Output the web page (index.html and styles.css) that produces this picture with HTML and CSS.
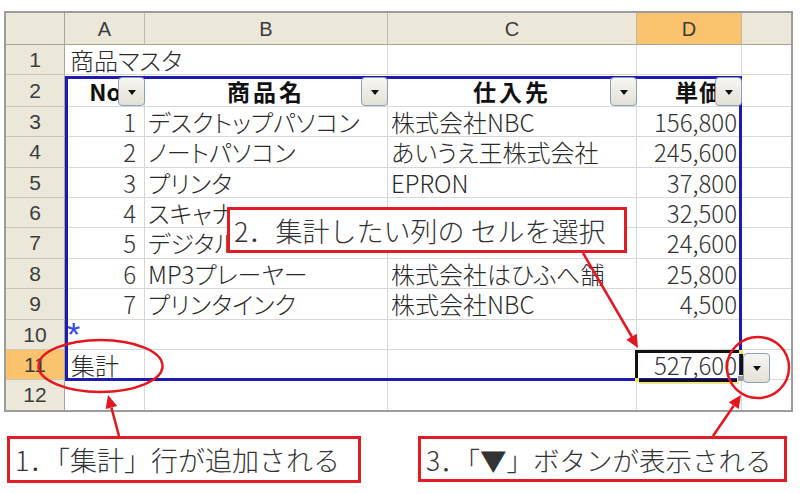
FILE: index.html
```html
<!DOCTYPE html>
<html lang="ja">
<head>
<meta charset="utf-8">
<title>集計行</title>
<link rel="stylesheet" href="styles.css">
</head>
<body>
<div class="page">
  <div class="sheet">
    <div class="corner"></div>
    <div class="ch">A</div>
    <div class="ch">B</div>
    <div class="ch">C</div>
    <div class="ch sel">D</div>
    <div class="ch last"></div>

    <div class="rh">1</div>
    <div class="c span2 txt-l title">商品マスタ</div>
    <div class="c"></div>
    <div class="c"></div>
    <div class="c e"></div>

    <div class="rh">2</div>
    <div class="c hd txt-r pad-no">No.<span class="dd"></span></div>
    <div class="c hd txt-c">商品名<span class="dd"></span></div>
    <div class="c hd txt-c">仕入先<span class="dd"></span></div>
    <div class="c hd txt-r pad-price">単価<span class="dd"></span></div>
    <div class="c e"></div>

    <div class="rh">3</div>
    <div class="c num-a">1</div>
    <div class="c txt-l">デスクトップパソコン</div>
    <div class="c txt-l">株式会社NBC</div>
    <div class="c num-d">156,800</div>
    <div class="c e"></div>

    <div class="rh">4</div>
    <div class="c num-a">2</div>
    <div class="c txt-l">ノートパソコン</div>
    <div class="c txt-l">あいうえ王株式会社</div>
    <div class="c num-d">245,600</div>
    <div class="c e"></div>

    <div class="rh">5</div>
    <div class="c num-a">3</div>
    <div class="c txt-l">プリンタ</div>
    <div class="c txt-l">EPRON</div>
    <div class="c num-d">37,800</div>
    <div class="c e"></div>

    <div class="rh">6</div>
    <div class="c num-a">4</div>
    <div class="c txt-l">スキャナ</div>
    <div class="c txt-l"></div>
    <div class="c num-d">32,500</div>
    <div class="c e"></div>

    <div class="rh">7</div>
    <div class="c num-a">5</div>
    <div class="c txt-l">デジタル</div>
    <div class="c txt-l"></div>
    <div class="c num-d">24,600</div>
    <div class="c e"></div>

    <div class="rh">8</div>
    <div class="c num-a">6</div>
    <div class="c txt-l">MP3プレーヤー</div>
    <div class="c txt-l">株式会社はひふへ舗</div>
    <div class="c num-d">25,800</div>
    <div class="c e"></div>

    <div class="rh">9</div>
    <div class="c num-a">7</div>
    <div class="c txt-l">プリンタインク</div>
    <div class="c txt-l">株式会社NBC</div>
    <div class="c num-d">4,500</div>
    <div class="c e"></div>

    <div class="rh">10</div>
    <div class="c star">*</div>
    <div class="c"></div>
    <div class="c"></div>
    <div class="c"></div>
    <div class="c e"></div>

    <div class="rh sel">11</div>
    <div class="c txt-l total">集計</div>
    <div class="c"></div>
    <div class="c"></div>
    <div class="c num-d">527,600</div>
    <div class="c e"></div>

    <div class="rh b">12</div>
    <div class="c b"></div>
    <div class="c b"></div>
    <div class="c b"></div>
    <div class="c b"></div>
    <div class="c e b"></div>
  </div>

  <div class="notes">
    <div class="note note1">1．「集計」行が追加される</div>
    <div class="note note3">3．「▼」ボタンが表示される</div>
  </div>

  <div class="list-border"></div>
  <div class="cell-sel"></div>
  <div class="handle h-tr"></div>
  <div class="handle h-bl"></div>
  <div class="sel-under"></div>
  <div class="fill-handle"></div>
  <div class="dd dd-total"></div>

  <div class="note2">2．集計したい列の セルを選択</div>

  <svg class="marks" width="800" height="494" viewBox="0 0 800 494" aria-hidden="true">
    <ellipse cx="100.5" cy="366" rx="62" ry="26" fill="none" stroke="#e4161f" stroke-width="2.5"/>
    <ellipse cx="758" cy="367.5" rx="31" ry="30.5" fill="none" stroke="#e4161f" stroke-width="2.5"/>
    <line x1="583" y1="253" x2="632" y2="337" stroke="#e4161f" stroke-width="2.5"/>
    <polygon points="638,348 626.3,339.7 636.7,333.7" fill="#e4161f"/>
    <line x1="119" y1="436" x2="111.4" y2="407.6" stroke="#e4161f" stroke-width="2.5"/>
    <polygon points="108,395 117.2,406 105.6,409.1" fill="#e4161f"/>
    <line x1="713" y1="436" x2="733.7" y2="405.7" stroke="#e4161f" stroke-width="2.5"/>
    <polygon points="741,395 738.7,409.1 728.7,402.3" fill="#e4161f"/>
  </svg>
</div>
</body>
</html>
```

FILE: styles.css
```css
html, body {
  margin: 0;
  padding: 0;
  background: #ffffff;
}

.page {
  position: relative;
  width: 800px;
  height: 494px;
  overflow: hidden;
  font-family: "Noto Sans CJK JP", "Noto Sans", sans-serif;
  color: #2a2a2a;
}

.sheet {
  display: grid;
  grid-template-columns: 59px 80px 243px 249px 105px 49px;
  grid-template-rows: 32px 30px 32px 30px 31px 30px 30px 31px 30px 31px 30px 30px 30px;
  width: 789px;
  margin: 11px 0 0 4px;
  border: 2px solid #9c9c9c;
  box-sizing: border-box;
  background: #ffffff;
}

.corner,
.ch,
.rh {
  background: #ebe8da;
  box-sizing: border-box;
  display: flex;
  align-items: center;
  justify-content: center;
  color: #3c3c3c;
  line-height: 24px;
}

.corner {
  border-right: 1px solid #a8a597;
  border-bottom: 1px solid #a8a597;
}

.ch {
  border-right: 1px solid #bdbaad;
  border-bottom: 1px solid #a8a597;
  font-family: "Liberation Sans", "Noto Sans", sans-serif;
  font-size: 20px;
}

.ch.last {
  border-right: none;
}

.rh {
  border-right: 1px solid #a8a597;
  border-bottom: 1px solid #cac7b9;
  font-family: "Liberation Sans", "Noto Sans", sans-serif;
  font-size: 21px;
}

.rh.b {
  border-bottom: none;
}

.ch.sel,
.rh.sel {
  background: #fbc36d;
}

.c {
  position: relative;
  box-sizing: border-box;
  border-right: 1px solid #d7d7d7;
  border-bottom: 1px solid #d7d7d7;
  display: flex;
  align-items: center;
  white-space: nowrap;
  font-size: 24px;
  line-height: 28px;
  font-weight: 300;
  font-feature-settings: "palt";
}

.c.e {
  border-right: none;
}

.c.b {
  border-bottom: none;
}

.span2 {
  grid-column: span 2;
}

.txt-l {
  justify-content: flex-start;
  padding-left: 3px;
}

.title {
  padding-left: 5px;
}

.total {
  padding-left: 6px;
}

.txt-c {
  justify-content: center;
}

.txt-r {
  justify-content: flex-end;
}

.num-a {
  justify-content: flex-end;
  padding-right: 8px;
  color: #333333;
}

.num-d {
  justify-content: flex-end;
  padding-right: 4px;
  color: #333333;
}

.hd {
  font-weight: 700;
  font-size: 23px;
  letter-spacing: 3px;
  color: #111111;
  font-feature-settings: normal;
}

.pad-no {
  padding-right: 16px;
  letter-spacing: 0;
}

.pad-price {
  padding-right: 18px;
  letter-spacing: 1px;
}

.star {
  align-items: flex-start;
  padding-left: 2px;
  color: #3346f2;
  font-family: "Liberation Sans", sans-serif;
  font-size: 34px;
  line-height: 28px;
}

/* dropdown buttons */
.dd {
  position: absolute;
  right: -1px;
  top: 2px;
  bottom: 0;
  width: 27px;
  box-sizing: border-box;
  border: 1.5px solid #8aa0ba;
  border-radius: 4px;
  background: linear-gradient(#f7f6f1, #e3e0d6);
  z-index: 2;
}

.dd::after {
  content: "";
  position: absolute;
  left: 50%;
  top: 50%;
  margin-left: -4px;
  margin-top: -2px;
  border-left: 4px solid transparent;
  border-right: 4px solid transparent;
  border-top: 5px solid #111111;
}

.dd-total {
  left: 743px;
  top: 353px;
  right: auto;
  bottom: auto;
  width: 27px;
  height: 30px;
  z-index: 4;
}

/* list border and selection */
.list-border {
  position: absolute;
  left: 65px;
  top: 76px;
  width: 677px;
  height: 305px;
  border: 3px solid #1c1cb2;
  box-sizing: border-box;
  z-index: 1;
}

.cell-sel {
  position: absolute;
  left: 635px;
  top: 350px;
  width: 108px;
  height: 32px;
  border: 3px solid #121212;
  box-sizing: border-box;
  z-index: 3;
}

.handle {
  position: absolute;
  width: 4px;
  height: 4px;
  background: #f1e35a;
  z-index: 4;
}

.h-tr {
  left: 739px;
  top: 350px;
}

.h-bl {
  left: 635px;
  top: 378px;
}

.sel-under {
  position: absolute;
  left: 639px;
  top: 382px;
  width: 100px;
  height: 2px;
  background: #eee48a;
  z-index: 3;
}

.fill-handle {
  position: absolute;
  left: 737px;
  top: 375px;
  width: 7px;
  height: 7px;
  background: #9a9a9a;
  border: 1px solid #e8e8e8;
  box-sizing: border-box;
  z-index: 4;
}

/* callouts */
.notes {
  display: flex;
  gap: 57px;
  margin-top: 24px;
  padding-left: 7px;
}

.note,
.note2 {
  box-sizing: border-box;
  border: 3px solid #e21c25;
  background: #ffffff;
  color: #333333;
  font-weight: 300;
  white-space: nowrap;
  display: flex;
  align-items: center;
}

.note {
  height: 47px;
  padding-left: 5px;
}

.note1 {
  width: 354px;
  font-size: 27px;
}

.note3 {
  width: 369px;
  font-size: 26.5px;
  height: 46px;
}

.note2 {
  position: absolute;
  left: 227px;
  top: 207px;
  width: 400px;
  height: 46px;
  padding-left: 4px;
  font-size: 27px;
  z-index: 4;
}

.marks {
  position: absolute;
  left: 0;
  top: 0;
  z-index: 5;
  pointer-events: none;
}
```
